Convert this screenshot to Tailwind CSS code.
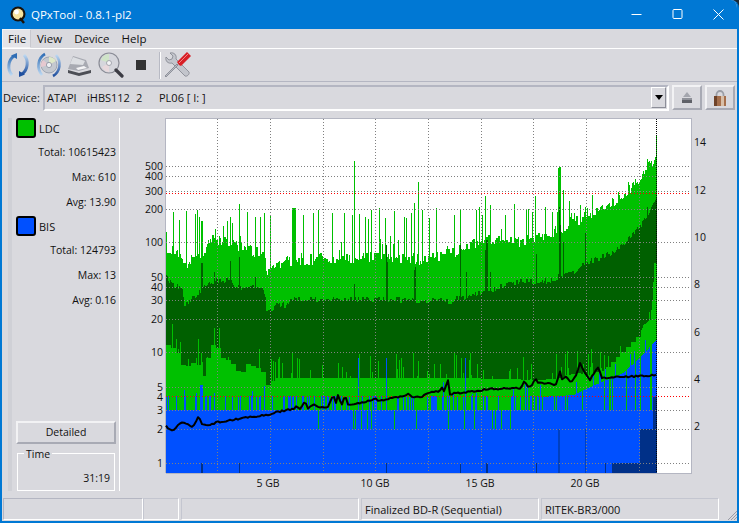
<!DOCTYPE html>
<html lang="en">
<head>
  <meta charset="UTF-8">
  <title>QPxTool - 0.8.1-pl2</title>
  <script src="https://cdn.jsdelivr.net/npm/@tailwindcss/browser@4"></script>
</head>
<body class="bg-[#1b2a38] overflow-hidden">
  <div class="w-[739px] h-[523px] flex flex-col bg-[#d9d9de] border-x-2 border-b-2 border-[#0078d4] rounded-tr-[8px] overflow-hidden text-[10.5px] leading-none text-[#111] font-['Open_Sans','Noto_Sans',sans-serif]">

    <!-- title bar -->
    <header class="h-[29px] -mx-[2px] shrink-0 bg-[#0078d4] flex items-center text-white">
      <svg class="ml-[10px] w-[16px] h-[18px]" viewBox="0 0 16 18">
        <circle cx="8" cy="8" r="7.5" fill="#1a1208"/>
        <circle cx="8" cy="8" r="5.4" fill="#f6e3a0"/>
        <circle cx="6.5" cy="6" r="2.4" fill="#fff"/>
        <path d="M10 12l4 5" stroke="#1a1208" stroke-width="2.4"/>
      </svg>
      <span class="ml-[5px] text-[11.5px]">QPxTool - 0.8.1-pl2</span>
      <div class="ml-auto flex items-center">
        <svg class="w-[41px] h-[29px]" viewBox="0 0 41 29"><path d="M15.5 14.5h10" stroke="#fff"/></svg>
        <svg class="w-[41px] h-[29px]" viewBox="0 0 41 29"><rect x="16" y="9.5" width="9" height="9" rx="1" fill="none" stroke="#fff"/></svg>
        <svg class="w-[41px] h-[29px]" viewBox="0 0 41 29"><path d="M15.5 9.5l10 10M25.5 9.5l-10 10" stroke="#fff"/></svg>
      </div>
    </header>

    <!-- menu -->
    <nav class="h-[20px] shrink-0 flex items-center border-b border-white text-[11.5px]">
      <span class="h-full w-[29px] flex items-center pl-[5px] bg-[#e4e4e8] border border-[#f2f2f4] border-r-[#c8c8ce]">File</span>
      <span class="ml-[6px]">View</span>
      <span class="ml-[12px]">Device</span>
      <span class="ml-[12px]">Help</span>
    </nav>

    <!-- toolbar -->
    <div class="h-[33px] shrink-0 flex items-center pl-[4px] border-b border-[#b4b6c2]">
      <svg class="w-[24px] h-[26px]" viewBox="0 0 24 26">
        <defs>
          <linearGradient id="arcL" x1="0" y1="0" x2="0" y2="1"><stop offset="0" stop-color="#2f6db5"/><stop offset="1" stop-color="#bcd8f2"/></linearGradient>
          <linearGradient id="arcR" x1="0" y1="0" x2="0" y2="1"><stop offset="0" stop-color="#bcd8f2"/><stop offset="1" stop-color="#1f4f9e"/></linearGradient>
        </defs>
        <path d="M8 4C2 8 1 18 6 23" fill="none" stroke="url(#arcL)" stroke-width="3"/>
        <path d="M16 22c6-4 7-14 2-19" fill="none" stroke="url(#arcR)" stroke-width="3"/>
        <path d="M5 3.5l6-2.5 0 6z" fill="#2f6db5"/><path d="M19 22.500l-6 2.500 0-6z" fill="#1f4f9e"/>
      </svg>
      <svg class="ml-[6px] w-[26px] h-[26px]" viewBox="0 0 26 26">
        <circle cx="13" cy="13" r="8" fill="#c4c8cf" stroke="#8b93a3" stroke-width=".7"/>
        <path d="M13 5a8 8 0 0 1 7 4l-7 4z" fill="#dfe9c8"/>
        <path d="M7 8a8 8 0 0 0-2 7l8-2z" fill="#e6c9d0"/>
        <circle cx="13" cy="13" r="2.600" fill="#eef0f4" stroke="#7c8494" stroke-width=".7"/>
        <path d="M9 2C2 6 0 16 6 23" fill="none" stroke="url(#arcL)" stroke-width="2.600"/>
        <path d="M17 24c7-4 9-14 3-21" fill="none" stroke="url(#arcR)" stroke-width="2.600"/>
      </svg>
      <svg class="ml-[5px] w-[25px] h-[21px]" viewBox="0 0 25 21">
        <path d="M1 14L6 1l13 4 3 8-10 3z" fill="#a8aab2"/>
        <path d="M6 2l12 4-2 4-13-1z" fill="#dcdee2"/>
        <path d="M1 15l11 3 12-3v3l-12 3-11-3z" fill="#4c4e55"/>
        <path d="M9 13l8-2 3 2-9 2z" fill="#f4f4f6"/>
      </svg>
      <svg class="ml-[6px] w-[26px] h-[26px]" viewBox="0 0 26 26">
        <circle cx="11" cy="11" r="10" fill="#d5d6dc" stroke="#8a8c96" stroke-width="1.200"/>
        <path d="M11 2a9 9 0 0 0-8 6l8 3z" fill="#cfe4c8"/>
        <path d="M4 15a9 9 0 0 0 7 5v-9z" fill="#e8d8dc"/>
        <circle cx="11" cy="11" r="2.500" fill="#f4f4f6" stroke="#8a8c96" stroke-width=".7"/>
        <path d="M18 18l6 6" stroke="#3c3c44" stroke-width="3.200" stroke-linecap="round"/>
      </svg>
      <div class="ml-[12px] w-[10px] h-[10px] bg-[#333]"></div>
      <div class="ml-[13px] w-px h-[27px] bg-[#b8bac4] border-r border-white box-content"></div>
      <svg class="ml-[3px] w-[28px] h-[28px]" viewBox="0 0 28 28">
        <path d="M2 6l3 3 3-1 1-3-3-3c4-1 7 2 6 6l13 13c1 2-2 5-4 4L8 12C4 13 1 10 2 6z" fill="#c3c5cc" stroke="#777a84" stroke-width=".7"/>
        <path d="M14 14L5 23l-3 3-1-1 3-3 9-9z" fill="#b8bac2" stroke="#777a84" stroke-width=".7"/>
        <path d="M13 11L23 1l4 4-10 10-2-1z" fill="#d81f26"/>
        <path d="M15 12L24 3" stroke="#f6a0a0" stroke-width=".8"/>
      </svg>
    </div>

    <!-- device row -->
    <div class="h-[31px] shrink-0 flex items-center pl-[1px] text-[11px]">
      <span class="w-[40px]">Device:</span>
      <div class="w-[626px] h-[26px] flex items-center pl-[2px] border-2 border-[#b4b6c2] border-r-white border-b-white">
        <span class="w-[40px]">ATAPI</span>
        <span class="w-[49px]">iHBS112</span>
        <span class="w-[23px]">2</span>
        <span class="whitespace-pre">PL06 [ I: ]</span>
        <div class="ml-auto mr-[1px] w-[15px] h-[21px] flex items-center justify-center border border-white border-r-[#8c8e98] border-b-[#8c8e98]">
          <div class="w-0 h-0 border-x-[4px] border-x-transparent border-t-[5px] border-t-black"></div>
        </div>
      </div>
      <div class="ml-[3px] w-[30px] h-[25px] flex items-center justify-center border-2 border-[#f2f2f4] border-r-[#a8aab4] border-b-[#a8aab4]">
        <svg class="w-[10px] h-[11px]" viewBox="0 0 10 11"><path d="M5 0l4 5H1z" fill="#a4a6ae"/><rect y="6" width="10" height="2" fill="#8f9199"/><rect y="8" width="10" height="3" fill="#5f6168"/></svg>
      </div>
      <div class="ml-[3px] w-[30px] h-[25px] flex items-center justify-center border-2 border-[#f2f2f4] border-r-[#a8aab4] border-b-[#a8aab4]">
        <svg class="w-[12px] h-[16px]" viewBox="0 0 12 16"><path d="M2.500 7V4.500a3.500 3.500 0 0 1 7 0V7" fill="none" stroke="#9b9ea6" stroke-width="1.800"/><rect y="6" width="12" height="10" fill="#a56f4c"/><rect y="6" width="3" height="10" fill="#6f4329"/><rect x="7" y="6" width="3" height="10" fill="#d8bfa8"/></svg>
      </div>
    </div>

    <!-- main -->
    <div class="flex-1 flex min-h-0">
      <aside class="ml-[6px] mt-[5px] mb-[7px] w-[112px] shrink-0 flex flex-col border-l-4 border-r border-l-[#cfd0d6] border-r-white pl-[4px] pr-[3px]">
        <div class="h-[20px] flex items-center gap-[3px]">
          <div class="w-[20px] h-[20px] rounded-[3px] border-2 border-black bg-[#00c000]"></div><span class="text-[11px]">LDC</span>
        </div>
        <div class="h-[25px] mt-[2px] flex items-center justify-end">Total: 10615423</div>
        <div class="h-[25px] flex items-center justify-end">Max: 610</div>
        <div class="h-[25px] flex items-center justify-end">Avg: 13.90</div>
        <div class="h-[20px] mt-[1px] flex items-center gap-[3px]">
          <div class="w-[20px] h-[20px] rounded-[3px] border-2 border-black bg-[#0050ff]"></div><span class="text-[11px]">BIS</span>
        </div>
        <div class="h-[25px] mt-[2px] flex items-center justify-end">Total: 124793</div>
        <div class="h-[25px] flex items-center justify-end">Max: 13</div>
        <div class="h-[25px] flex items-center justify-end">Avg: 0.16</div>
        <div class="mt-auto h-[23px] flex items-center justify-center border-2 border-[#f2f2f4] border-r-[#a8aab4] border-b-[#a8aab4]">Detailed</div>
        <div class="relative mt-[9px] mx-[1px] h-[38px] border border-white flex items-end justify-end pr-[4px] pb-[7px]">
          <span class="absolute left-[6px] -top-[5px] px-[2px] bg-[#d9d9de]">Time</span>
          <span>31:19</span>
        </div>
      </aside>
      <svg id="chart" class="block shrink-0 ml-[2px] mt-[1px] w-[617px] h-[378px]" viewBox="122 114 617 378" font-size="10.5" fill="#111" shape-rendering="crispEdges"></svg>
    </div>

    <!-- status bar -->
    <footer class="relative h-[22px] mb-[1px] shrink-0 flex gap-[2px] pl-[1px] text-[11px]">
      <div class="w-[140px] border border-[#b4b6c2] border-r-white border-b-white"></div>
      <div class="-ml-[2px] w-[36px] border border-[#c4c6d0] border-r-white border-b-white"></div>
      <div class="w-[178px] border border-[#c4c6d0] border-r-white border-b-white"></div>
      <div class="w-[178px] flex items-center pl-[3px] border border-[#c4c6d0] border-r-white border-b-white">Finalized BD-R (Sequential)</div>
      <div class="w-[178px] flex items-center pl-[3px] border border-[#c4c6d0] border-r-white border-b-white">RITEK-BR3/000</div>
      <svg class="absolute right-0 bottom-0 w-[10px] h-[10px]" viewBox="0 0 10 10"><path d="M10 1L1 10M10 4l-6 6M10 7l-3 3" stroke="#9a9ca6" fill="none"/></svg>
    </footer>
  </div>

  <script>
    const NS = 'http://www.w3.org/2000/svg';
    const svg = document.getElementById('chart');
    const X0 = 166, X1 = 656, BOT = 473;

    // seeded rng so every render is the same
    let seed = 12345;
    const rnd = () => (seed = (seed * 16807) % 2147483647) / 2147483647;

    function lerp(pts, x) {
      for (let i = 1; i < pts.length; i++) {
        if (x <= pts[i][0]) {
          const [a, b] = pts[i - 1], [c, d] = pts[i];
          return b + (d - b) * (x - a) / (c - a);
        }
      }
      return pts[pts.length - 1][1];
    }

    const lightTop = [[166,250],[170,252],[180,254],[183,267],[190,262],[195,258],[203,262],[210,240],[227,243],[240,248],[253,253],[263,255],[267,272],[272,272],[287,262],[327,260],[360,260],[383,258],[417,262],[450,255],[483,242],[517,243],[550,238],[560,233],[573,225],[587,217],[607,210],[623,197],[637,183],[647,170],[656,158]];
    const lightSpikes = [[166,232],[173,212],[179,220],[186,211],[195,214],[197,210],[199,217],[201,221],[202,221],[227,221],[230,217],[239,204],[247,212],[255,217],[260,217],[264,213],[270,215],[292,208],[293,208],[294,208],[295,208],[303,215],[313,213],[318,210],[332,213],[344,213],[352,215],[354,161],[359,214],[365,217],[368,219],[371,210],[379,208],[385,218],[394,211],[404,217],[406,218],[411,213],[414,203],[418,182],[422,210],[429,218],[436,208],[454,215],[460,209],[476,210],[479,207],[482,215],[485,196],[490,205],[505,215],[514,204],[526,210],[528,209],[532,212],[535,196],[545,207],[552,212],[557,212],[558,168],[559,167],[560,167],[563,190],[569,201],[574,213],[580,205],[585,207],[592,195],[602,205],[612,198],[618,192],[628,182],[635,179],[647,159],[655,157]];
    const darkTop = [[166,278],[172,287],[182,288],[184,305],[188,305],[190,300],[196,298],[205,285],[210,283],[215,281],[230,281],[235,288],[262,288],[265,296],[266,312],[270,312],[275,307],[285,306],[290,300],[400,301],[450,302],[483,293],[517,283],[550,282],[560,277],[573,273],[587,263],[605,257],[620,248],[635,233],[645,220],[656,197]];
    const darkSpikes = [[201,263],[202,263],[214,272],[230,261],[239,257],[255,277],[354,284],[386,245],[387,262],[414,270],[415,267],[460,245],[466,272],[485,250],[486,240],[487,240],[490,272],[536,254],[559,207],[560,225],[563,242],[585,233],[640,225],[647,207]];
    const darkBot = [[166,345],[175,350],[183,370],[188,363],[195,363],[202,378],[205,360],[213,340],[220,358],[230,362],[240,377],[243,363],[260,370],[267,387],[273,378],[350,378],[460,378],[540,380],[557,378],[573,373],[587,375],[603,370],[613,360],[623,350],[630,343],[640,333],[643,325],[650,320],[652,300],[654,263],[656,263]];
    const blackLine = [[166,425],[168,428],[172,431],[175,429],[178,425],[183,422],[187,424],[193,427],[199,415],[201,423],[205,425],[213,424],[217,421],[220,422],[237,419],[273,414],[277,412],[293,409],[296,407],[300,409],[305,402],[308,409],[313,404],[318,407],[328,407],[333,395],[336,403],[338,395],[342,405],[345,394],[348,405],[360,403],[373,400],[375,397],[377,401],[400,397],[408,394],[413,397],[422,397],[428,393],[440,391],[441,380],[443,394],[448,380],[450,394],[467,392],[490,389],[520,388],[525,381],[528,386],[533,386],[535,377],[538,383],[550,383],[555,385],[557,382],[560,372],[563,382],[565,375],[570,382],[575,378],[580,363],[585,373],[590,380],[598,367],[602,378],[640,376],[656,375]];

    const paths = { '#00c000': '', '#006000': '', '#0050ff': '', '#0040c0': '', '#003088': '' };
    const seg = (c, x, a, b) => { if (b > a) paths[c] += `M${x + .5} ${Math.round(a)}V${Math.round(b)}`; };

    let jitter = 0, jitterDark = 0, heldBot = 378;
    for (let x = X0; x <= X1; x++) {
      if (x % 2 === 0 || rnd() < .25) { jitter = rnd() * 11 - 4; jitterDark = rnd() * 6 - 2; }
      let lt = lerp(lightTop, x) - jitter;
      if (rnd() < .07) lt -= rnd() * 22;
      const ls = lightSpikes.find(s => s[0] === x); if (ls) lt = ls[1];
      let dt = lerp(darkTop, x) - jitterDark;
      const ds = darkSpikes.find(s => s[0] === x); if (ds) dt = ds[1];

      // lower edge of the dark band comes in blocks, with thin light spikes above it
      if ((x - X0) % 5 === 0) heldBot = lerp(darkBot, x);
      let db = x > 640 ? lerp(darkBot, x) : heldBot;
      if (rnd() < .2) db -= rnd() * 26;
      if (x >= 650) dt = Math.max(dt, lerp(darkTop, x));

      let bt;
      if (x < 540) {
        bt = 410;
        const r = rnd();
        if (r < (x < 500 ? .22 : .3)) bt = 396 - (rnd() < .12 ? rnd() * 14 : 0);
        else if (x > 270 && r > .93) bt = 429;
      } else {
        bt = lerp([[540,397],[573,395],[590,387],[623,373],[640,357],[656,340]], x);
        const r = rnd();
        if (r < .14) bt = 410;
        else if (r > .92) bt -= 12;
      }
      if ([358,386,465].includes(x)) bt = 358;
      if (x >= 200 && x <= 202) bt = 385;

      seg('#00c000', x, lt, BOT);
      seg('#006000', x, dt, db);
      seg('#0050ff', x, bt, BOT);

      // dark blue at the foot of the graph
      if ([201,202,239,386,460,486,487,536,605].includes(x)) seg('#003088', x, 463, BOT);
      if ([558,559].includes(x)) seg('#0040c0', x, 429, BOT);
      if (x === 585) seg('#0040c0', x, 429, BOT);
      if (x >= 612 && x < 640) seg('#003088', x, 463, BOT);
      if (x >= 640 && x < 653) seg('#003088', x, 429, BOT);
      if (x >= 653) seg('#003088', x, 397, BOT);
    }

    let html = `<rect x="166" y="119" width="525" height="354" fill="#fff"/>`;
    html += `<path d="M165.5 473V118.5H691.5V473.5H165.5" fill="none" stroke="#b4b6c2"/>`;
    for (const c in paths) html += `<path d="${paths[c]}" stroke="${c}" fill="none"/>`;

    // grid
    const ticks = [[500,166],[400,176],[300,191],[200,209],[100,242],[50,277],[40,287],[30,300],[20,319],[10,352],[5,387],[4,397],[3,410],[2,429],[1,463]];
    ticks.forEach(([v, y]) => {
      if (v !== 4) html += `<path d="M166 ${y + .5}H691" stroke="#808080" stroke-dasharray="1 2" fill="none"/>`;
      html += `<text x="163" y="${y + 4}" text-anchor="end" shape-rendering="auto">${v}</text>`;
    });
    [217, 270, 323, 375, 428, 481, 533, 586, 639].forEach(x => {
      html += `<path d="M${x + .5} 119V473" stroke="#808080" stroke-dasharray="1 2" fill="none"/>`;
    });
    [193, 396].forEach(y => {
      html += `<path d="M166 ${y + .5}H691" stroke="#ff0000" stroke-dasharray="1 2" fill="none"/>`;
    });
    html += `<path d="M656.5 119V473" stroke="#000" stroke-dasharray="1 1" fill="none"/>`;

    // black transfer line, roughened a little between the points
    const rough = [];
    for (let x = X0; x <= X1; x += 2) rough.push([x, +(lerp(blackLine, x) + (rnd() - .5) * 1.6).toFixed(1)]);
    html += `<polyline points="${rough.join(' ')}" fill="none" stroke="#000" stroke-width="2" stroke-linejoin="round" shape-rendering="auto"/>`;

    [['14',146],['12',194],['10',241],['8',288],['6',336],['4',383],['2',430]].forEach(([t, y]) => {
      html += `<text x="694" y="${y}">${t}</text>`;
    });
    [['5 GB',268],['10 GB',375],['15 GB',480],['20 GB',585]].forEach(([t, x]) => {
      html += `<text x="${x}" y="487" text-anchor="middle">${t}</text>`;
    });
    svg.innerHTML = html;
  </script>
</body>
</html>
